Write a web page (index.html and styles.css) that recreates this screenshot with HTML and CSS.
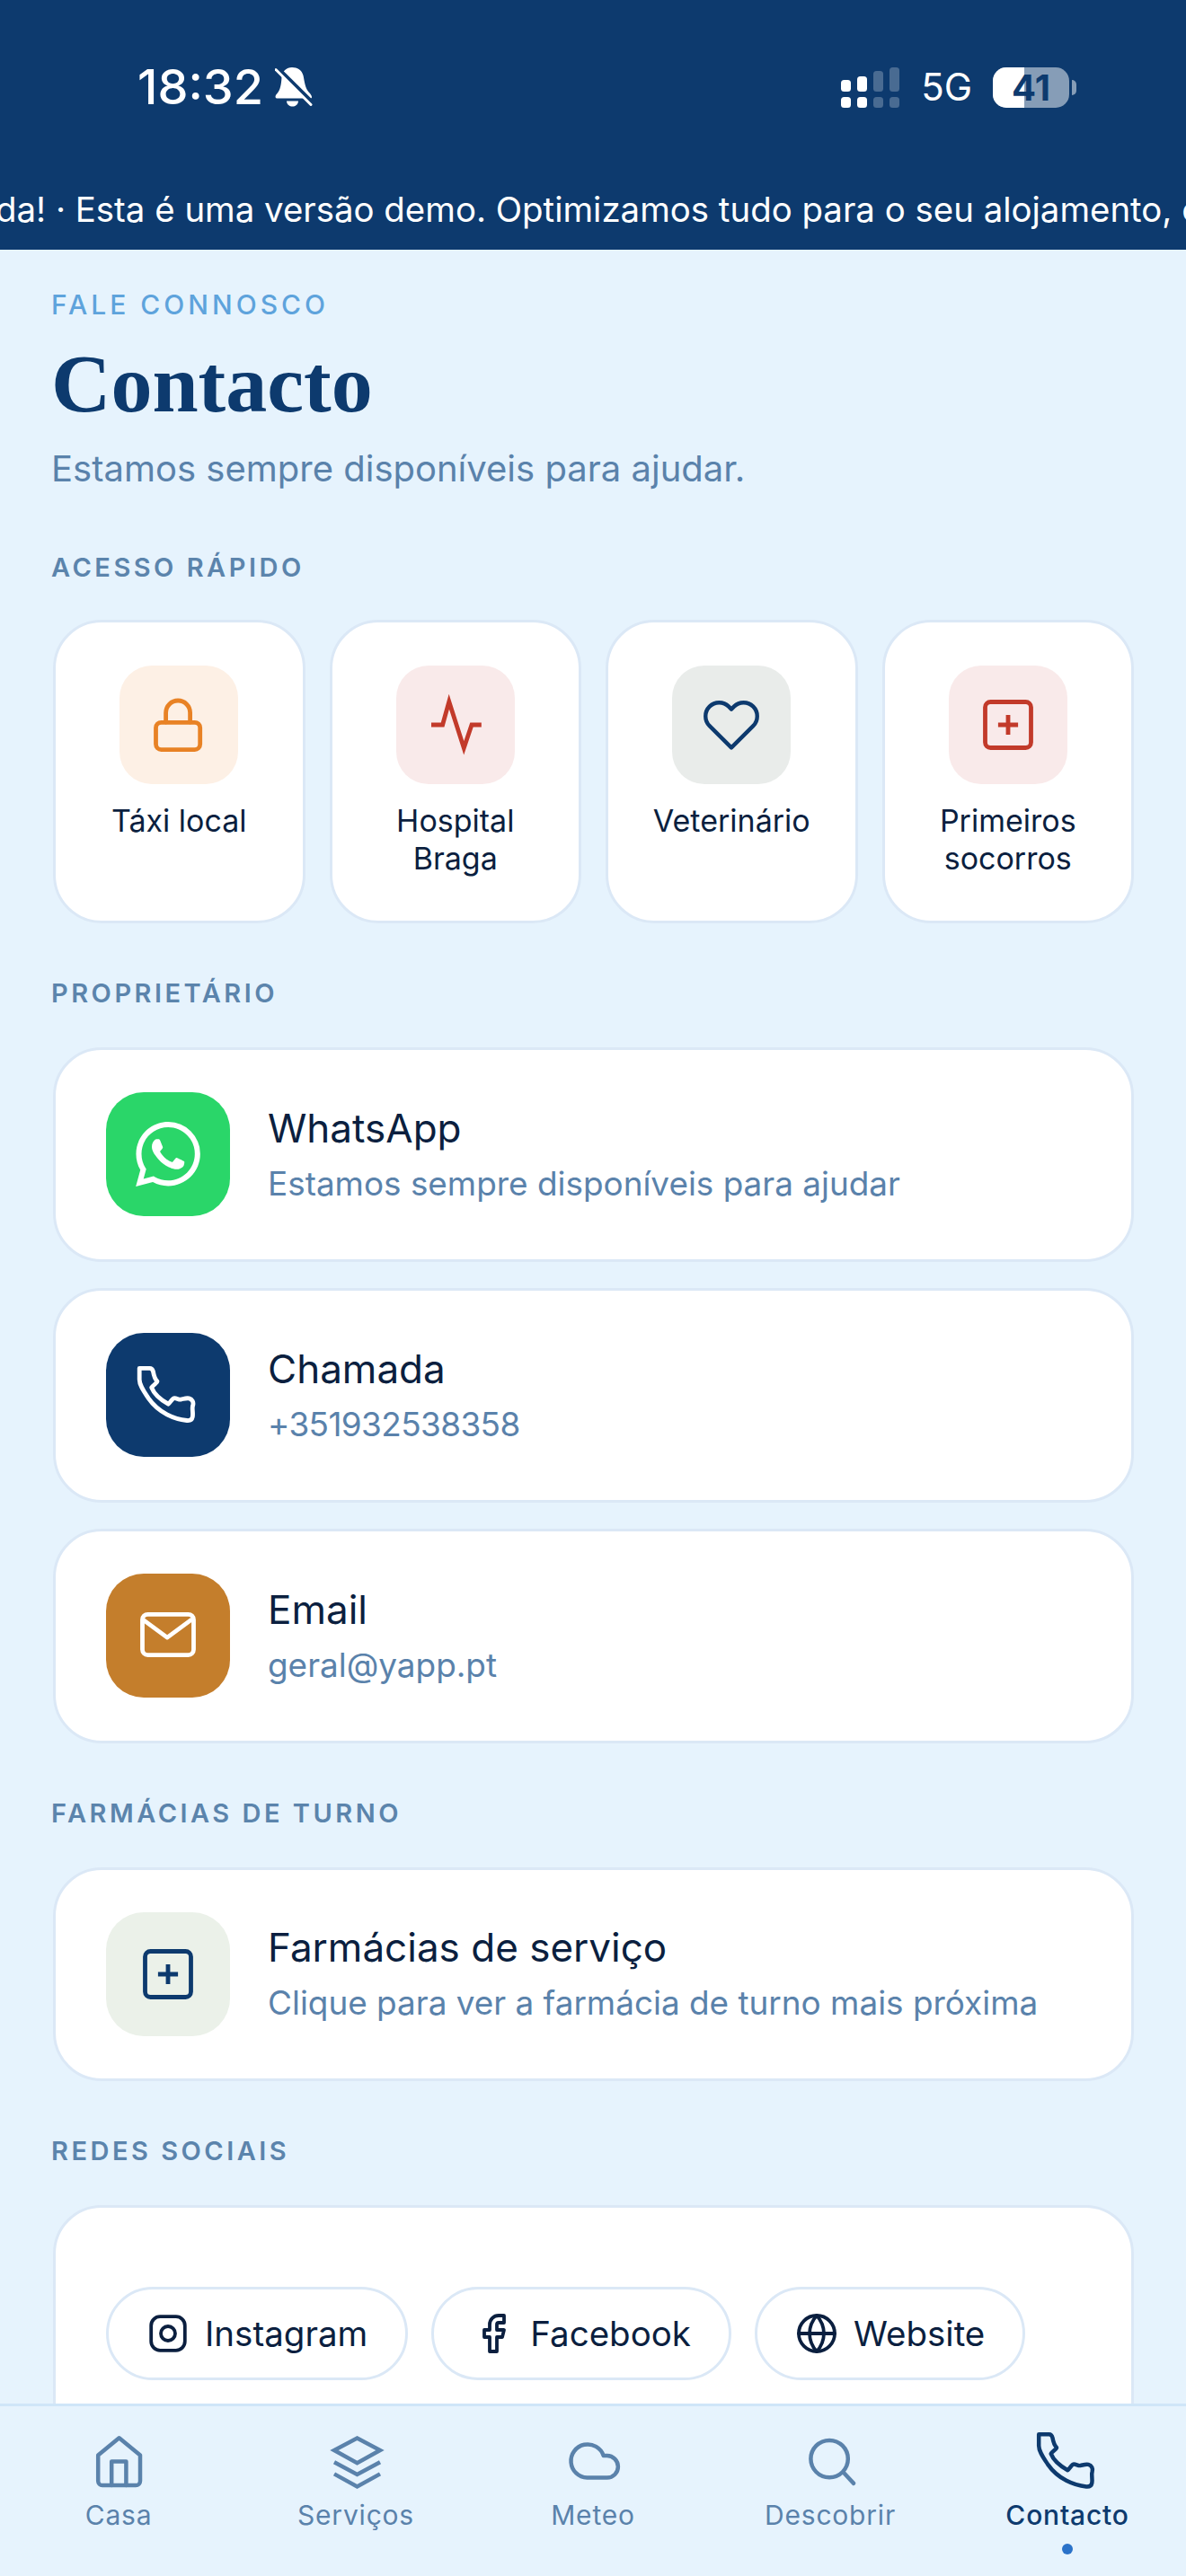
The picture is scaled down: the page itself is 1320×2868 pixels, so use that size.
FILE: index.html
```html
<!DOCTYPE html>
<html lang="pt">
<head>
    <meta charset="UTF-8">
    <meta name="viewport" content="width=device-width, initial-scale=1.0">
    <title>Contacto</title>
    <link rel="stylesheet" href="styles.css">
</head>
<body>
    <div id="app">
        <header class="topBox">
            <div class="statusBar">
                <div class="statusLeft">
                    <span class="time">18:32</span>
                    <svg class="bell" width="42" height="46" viewBox="0 0 42 46">
                        <path class="bellBody" d="M19 1C25 1 30 4 31.500 10 33 17 33.500 24 38 29 41 32 42 35 40 35.500H2C0 35 0 32.500 2.500 30 6 26 7 20 7.500 12 8 5 13 1 19 1Z"/>
                        <path class="bellBody" d="M13 38.500H26C25.500 46.500 13.500 46.500 13 38.500Z"/>
                        <path class="bellGap" d="M3 1.500 42 40"/>
                        <path class="bellLine" d="M1 3.500 40 42.500"/>
                    </svg>
                </div>
                <div class="statusRight">
                    <svg width="65" height="45" viewBox="0 0 65 45">
                        <g class="sigOn">
                            <rect x="0" y="14" width="11" height="13" rx="3.500"/>
                            <rect x="18" y="10" width="11" height="17" rx="3.500"/>
                            <rect x="0" y="33" width="11" height="12" rx="3.500"/>
                            <rect x="18" y="33" width="11" height="12" rx="3.500"/>
                        </g>
                        <g class="sigOff">
                            <rect x="36" y="4" width="11" height="23" rx="3.500"/>
                            <rect x="54" y="0" width="11" height="27" rx="3.500"/>
                            <rect x="36" y="33" width="11" height="12" rx="3.500"/>
                            <rect x="54" y="33" width="11" height="12" rx="3.500"/>
                        </g>
                    </svg>
                    <span class="net">5G</span>
                    <div class="battery">
                        <div class="batteryFill" style="width: 41%"></div>
                        <span class="batteryText">41</span>
                    </div>
                    <div class="batteryNub"></div>
                </div>
            </div>
            <div class="ticker">da! · Esta é uma versão demo. Optimizamos tudo para o seu alojamento, c</div>
        </header>

        <main class="content">
            <p class="eyebrow">FALE CONNOSCO</p>
            <h1>Contacto</h1>
            <p class="lead">Estamos sempre disponíveis para ajudar.</p>

            <h2 class="sectionLabel firstLabel">ACESSO RÁPIDO</h2>
            <div class="quickGrid">
                <div class="quickCard">
                    <div class="quickIcon tintOrange">
                        <svg class="stroke orange" width="72" height="72" viewBox="0 0 24 24">
                            <rect x="3.500" y="11.100" width="16.400" height="10.100" rx="2"/>
                            <path d="M7.200 11V7.500a4.500 4.500 0 0 1 9 0V11"/>
                        </svg>
                    </div>
                    <span>Táxi local</span>
                </div>
                <div class="quickCard">
                    <div class="quickIcon tintRed">
                        <svg class="stroke red sharp" width="72" height="72" viewBox="0 0 24 24">
                            <path d="M3 12h4.200L9.600 3.400 15.100 20.600 18 12h3.600"/>
                        </svg>
                    </div>
                    <span>Hospital Braga</span>
                </div>
                <div class="quickCard">
                    <div class="quickIcon tintGrey">
                        <svg class="stroke navy" width="66" height="66" viewBox="0 0 24 24">
                            <path d="M20.840 4.610a5.500 5.500 0 0 0-7.780 0L12 5.670l-1.060-1.060a5.500 5.500 0 0 0-7.780 7.780L12 21.230l8.840-8.840a5.500 5.500 0 0 0 0-7.780z"/>
                        </svg>
                    </div>
                    <span>Veterinário</span>
                </div>
                <div class="quickCard">
                    <div class="quickIcon tintRed">
                        <svg class="stroke red" width="72" height="72" viewBox="0 0 24 24">
                            <rect x="3.500" y="3.500" width="17" height="17" rx="2"/>
                            <path class="sharp" d="M12 8.300v7.400M8.300 12h7.400"/>
                        </svg>
                    </div>
                    <span>Primeiros socorros</span>
                </div>
            </div>

            <h2 class="sectionLabel">PROPRIETÁRIO</h2>
            <div class="rowList">
                <div class="rowCard">
                    <div class="rowIcon green">
                        <svg class="solid" width="72" height="72" viewBox="0 0 24 24">
                            <path d="M17.472 14.382c-.297-.149-1.758-.867-2.030-.967-.273-.099-.471-.148-.670.150-.197.297-.767.966-.940 1.164-.173.199-.347.223-.644.075-.297-.150-1.255-.463-2.390-1.475-.883-.788-1.480-1.761-1.653-2.059-.173-.297-.018-.458.130-.606.134-.133.298-.347.446-.520.149-.174.198-.298.298-.497.099-.198.050-.371-.025-.520-.075-.149-.669-1.612-.916-2.207-.242-.579-.487-.500-.669-.510-.173-.008-.371-.010-.570-.010-.198 0-.520.074-.792.372-.272.297-1.040 1.016-1.040 2.479 0 1.462 1.065 2.875 1.213 3.074.149.198 2.096 3.200 5.077 4.487.709.306 1.262.489 1.694.625.712.227 1.360.195 1.871.118.571-.085 1.758-.719 2.006-1.413.248-.694.248-1.289.173-1.413-.074-.124-.272-.198-.570-.347m-5.421 7.403h-.004a9.870 9.870 0 01-5.031-1.378l-.361-.214-3.741.982.998-3.648-.235-.374a9.860 9.860 0 01-1.510-5.260c.001-5.450 4.436-9.884 9.888-9.884 2.640 0 5.122 1.030 6.988 2.898a9.825 9.825 0 012.893 6.994c-.003 5.450-4.437 9.884-9.885 9.884m8.413-18.297A11.815 11.815 0 0012.050 0C5.495 0 .160 5.335.157 11.892c0 2.096.547 4.142 1.588 5.945L.057 24l6.305-1.654a11.882 11.882 0 005.683 1.448h.005c6.554 0 11.890-5.335 11.893-11.893a11.821 11.821 0 00-3.480-8.413z"/>
                        </svg>
                    </div>
                    <div class="rowText">
                        <strong>WhatsApp</strong>
                        <span>Estamos sempre disponíveis para ajudar</span>
                    </div>
                </div>
                <div class="rowCard">
                    <div class="rowIcon darkBlue">
                        <svg class="stroke white" width="72" height="72" viewBox="0 0 24 24">
                            <path d="M1.400 2.100H5.200C6 2.100 6.300 2.600 6.500 3.400 6.700 4.600 7 6 8 7 8.200 7.400 6.600 8.200 5.900 9.300 6.800 11.600 9.600 14 12.100 15.400 12.900 14.800 13.600 13.200 14.400 13.200 15.300 13.200 15.900 13.800 16.800 13.700 17.800 13.500 18.600 13.100 19.800 13.300 21 13.600 21.600 14.800 21.200 16 20.800 17 21.400 18.600 21.100 20.200 20.900 21.200 20 21.600 19 21.500 14.500 21 8.600 18.800 4.700 13.200 3 10.600 1.400 8.400 1.400 6.300Z"/>
                        </svg>
                    </div>
                    <div class="rowText">
                        <strong>Chamada</strong>
                        <span class="phone">+351932538358</span>
                    </div>
                </div>
                <div class="rowCard">
                    <div class="rowIcon ochre">
                        <svg class="stroke white" width="72" height="72" viewBox="0 0 24 24">
                            <rect x="2.500" y="4.100" width="19" height="15.100" rx="2"/>
                            <path d="M3 6.300l8.700 6.400 8.700-6.400"/>
                        </svg>
                    </div>
                    <div class="rowText">
                        <strong>Email</strong>
                        <span>geral@yapp.pt</span>
                    </div>
                </div>
            </div>

            <h2 class="sectionLabel">FARMÁCIAS DE TURNO</h2>
            <div class="rowList">
                <div class="rowCard">
                    <div class="rowIcon paleGreen">
                        <svg class="stroke navy" width="72" height="72" viewBox="0 0 24 24">
                            <rect x="3.500" y="3.500" width="17" height="17" rx="2"/>
                            <path class="sharp" d="M12 8.300v7.400M8.300 12h7.400"/>
                        </svg>
                    </div>
                    <div class="rowText">
                        <strong>Farmácias de serviço</strong>
                        <span>Clique para ver a farmácia de turno mais próxima</span>
                    </div>
                </div>
            </div>

            <h2 class="sectionLabel">REDES SOCIAIS</h2>
            <div class="socialCard">
                <div class="pill">
                    <svg class="stroke ink heavy" width="48" height="48" viewBox="0 0 24 24">
                        <rect x="2.600" y="2.600" width="18.800" height="18.800" rx="5"/>
                        <circle cx="12" cy="12" r="4"/>
                    </svg>
                    Instagram
                </div>
                <div class="pill">
                    <svg class="stroke ink heavy" width="48" height="48" viewBox="0 0 24 24">
                        <path d="M18 2h-3a5 5 0 0 0-5 5v3H7v4h3v8h4v-8h3l1-4h-4V7a1 1 0 0 1 1-1h3z"/>
                    </svg>
                    Facebook
                </div>
                <div class="pill">
                    <svg class="stroke ink heavy" width="48" height="48" viewBox="0 0 24 24">
                        <circle cx="12" cy="12" r="10"/>
                        <path d="M2 12h20M12 2a15.300 15.300 0 0 1 4 10 15.300 15.300 0 0 1-4 10 15.300 15.300 0 0 1-4-10 15.300 15.300 0 0 1 4-10z"/>
                    </svg>
                    Website
                </div>
            </div>
        </main>

        <nav class="bottomNav">
            <div class="navItem">
                <svg class="stroke thin" width="72" height="72" viewBox="0 0 24 24">
                    <path d="M4.400 9.800 12.200 3.400 20 9.800V19.400a1.600 1.600 0 0 1-1.600 1.600H6a1.600 1.600 0 0 1-1.600-1.600Z"/>
                    <path d="M9.400 21V12.200h5.400V21"/>
                </svg>
                <span>Casa</span>
            </div>
            <div class="navItem">
                <svg class="stroke thin sharp" width="72" height="72" viewBox="0 0 24 24">
                    <path d="M12.500 3.500 21 8 12.500 12.700 4 8Z"/>
                    <path d="M4 12.400 12.500 17 21 12.400"/>
                    <path d="M4 16.800 12.500 21.500 21 16.800"/>
                </svg>
                <span>Serviços</span>
            </div>
            <div class="navItem">
                <svg class="stroke thin" width="72" height="72" viewBox="0 0 24 24">
                    <path d="M9.800 18.200h7.400a4.100 4.100 0 0 0 0-8.200h-1.300A6.200 6.200 0 1 0 9.800 18.200z"/>
                </svg>
                <span>Meteo</span>
            </div>
            <div class="navItem">
                <svg class="stroke thin" width="72" height="72" viewBox="0 0 24 24">
                    <circle cx="11.700" cy="11.200" r="6.900"/>
                    <path d="M17.100 16.400 20.700 20.300"/>
                </svg>
                <span>Descobrir</span>
            </div>
            <div class="navItem active">
                <svg class="stroke thin navy" width="72" height="72" viewBox="0 0 24 24">
                    <path d="M1.400 2.100H5.200C6 2.100 6.300 2.600 6.500 3.400 6.700 4.600 7 6 8 7 8.200 7.400 6.600 8.200 5.900 9.300 6.800 11.600 9.600 14 12.100 15.400 12.900 14.800 13.600 13.200 14.400 13.200 15.300 13.200 15.900 13.800 16.800 13.700 17.800 13.500 18.600 13.100 19.800 13.300 21 13.600 21.600 14.800 21.200 16 20.800 17 21.400 18.600 21.100 20.200 20.900 21.200 20 21.600 19 21.500 14.500 21 8.600 18.800 4.700 13.200 3 10.600 1.400 8.400 1.400 6.300Z"/>
                </svg>
                <span>Contacto</span>
                <i class="navDot"></i>
            </div>
        </nav>
    </div>
</body>
</html>
```

FILE: styles.css
```css
* {
    box-sizing: border-box;
}
body {
    margin: 0;
    font-family: "Inter", "Noto Sans", sans-serif;
    color: #0b1f3f;
    background-color: #e6f3fd;
}
#app {
    display: flex;
    flex-direction: column;
    height: 2868px;
    overflow: hidden;
}

/* top bar */
.topBox {
    height: 278px;
    flex-shrink: 0;
    background-color: #0d3a6e;
    color: #fff;
    padding-top: 74px;
}
.statusBar {
    display: flex;
    justify-content: space-between;
    align-items: center;
    height: 46px;
    padding-left: 153px;
    padding-right: 122px;
}
.statusLeft {
    display: flex;
    align-items: center;
    gap: 13px;
}
.time {
    font-size: 54px;
    font-weight: 500;
    line-height: 46px;
}
.bellBody {
    fill: #fff;
}
.bellGap {
    stroke: #0d3a6e;
    stroke-width: 4;
    fill: none;
}
.bellLine {
    stroke: #fff;
    stroke-width: 3;
    stroke-linecap: round;
    fill: none;
}
.statusRight {
    display: flex;
    align-items: center;
}
.sigOn rect {
    fill: #fff;
}
.sigOff rect {
    fill: rgba(255, 255, 255, 0.25);
}
.net {
    margin-left: 24px;
    font-size: 42px;
    line-height: 46px;
}
.battery {
    position: relative;
    width: 85px;
    height: 45px;
    margin-left: 23px;
    border-radius: 15px;
    background-color: rgba(255, 255, 255, 0.5);
}
.batteryFill {
    height: 100%;
    border-radius: 15px 0 0 15px;
    background-color: #fff;
}
.batteryText {
    position: absolute;
    top: 0;
    left: 0;
    right: 0;
    text-align: center;
    font-size: 40px;
    font-weight: 700;
    line-height: 45px;
    color: #0d3a6e;
}
.batteryNub {
    width: 5px;
    height: 17px;
    margin-left: 3px;
    border-radius: 0 5px 5px 0;
    background-color: rgba(255, 255, 255, 0.5);
}
.ticker {
    margin-top: 88px;
    margin-left: -5px;
    font-size: 38.400px;
    line-height: 50px;
    white-space: nowrap;
}

/* page content */
.content {
    flex: 1;
    min-height: 0;
    overflow: hidden;
    padding: 43px 58px 0 59px;
}
.eyebrow {
    margin: 0 0 0 -2px;
    font-size: 30px;
    font-weight: 500;
    line-height: 36px;
    letter-spacing: 4px;
    color: #5ea3dc;
}
h1 {
    margin: 20px 0 0 -2px;
    font-family: "Liberation Serif", serif;
    font-size: 92px;
    font-weight: 700;
    line-height: 100px;
    color: #0d3a6e;
}
.lead {
    margin: 20px 0 0 -2px;
    font-size: 40px;
    line-height: 50px;
    color: #5a82ab;
}
.sectionLabel {
    margin: 60px 0 42px -2px;
    font-size: 29px;
    font-weight: 600;
    line-height: 36px;
    letter-spacing: 3.500px;
    color: #5b84ac;
}
.firstLabel {
    margin-top: 67px;
    margin-bottom: 40px;
}

/* quick access */
.quickGrid {
    display: grid;
    grid-template-columns: repeat(4, 1fr);
    gap: 27px;
}
.quickCard {
    display: flex;
    flex-direction: column;
    align-items: center;
    padding: 48px 30px;
    text-align: center;
    font-size: 34px;
    font-weight: 400;
    line-height: 42px;
    background-color: #fff;
    border: 3px solid #dbe8f6;
    border-radius: 54px;
}
.quickIcon {
    display: flex;
    align-items: center;
    justify-content: center;
    flex-shrink: 0;
    width: 132px;
    height: 132px;
    margin-bottom: 20px;
    border-radius: 36px;
}
.tintOrange {
    background-color: #fdf0e5;
}
.tintRed {
    background-color: #f9eaea;
}
.tintGrey {
    background-color: #e9ecea;
}

/* list cards */
.rowList {
    display: flex;
    flex-direction: column;
    gap: 29.500px;
}
.rowCard {
    display: flex;
    align-items: center;
    gap: 42px;
    height: 238.500px;
    padding-left: 56px;
    background-color: #fff;
    border: 3px solid #dbe8f6;
    border-radius: 54px;
}
.rowIcon {
    display: flex;
    align-items: center;
    justify-content: center;
    width: 138px;
    height: 138px;
    border-radius: 42px;
}
.green {
    background-color: #2ad669;
}
.darkBlue {
    background-color: #0d3a6e;
}
.ochre {
    background-color: #c47e2c;
}
.paleGreen {
    background-color: #ebf1e9;
}
.rowText {
    display: flex;
    flex-direction: column;
    gap: 9px;
}
.rowText strong {
    font-size: 44px;
    font-weight: 400;
    line-height: 56px;
}
.rowText span {
    font-size: 36.900px;
    line-height: 50px;
    color: #5a82ab;
}
.rowText .phone {
    letter-spacing: -0.600px;
}

/* social */
.socialCard {
    display: flex;
    gap: 26px;
    height: 300px;
    padding: 88px 0 0 56px;
    background-color: #fff;
    border: 3px solid #dbe8f6;
    border-radius: 54px;
}
.pill {
    display: flex;
    align-items: center;
    gap: 17px;
    height: 104px;
    padding: 0 42px 0 42px;
    font-size: 38.500px;
    font-weight: 400;
    border: 3px solid #dbe8f6;
    border-radius: 52px;
}

/* icons */
.stroke {
    fill: none;
    stroke: #5a82ab;
    stroke-width: 1.600;
    stroke-linecap: round;
    stroke-linejoin: round;
}
.stroke.sharp, .sharp {
    stroke-linecap: butt;
    stroke-linejoin: miter;
}
.stroke.thin {
    stroke-width: 1.500;
}
.stroke.heavy {
    stroke-width: 1.900;
}
.stroke.navy {
    stroke: #0d3a6e;
}
.stroke.white {
    stroke: #fff;
}
.stroke.ink {
    stroke: #0b1f3f;
}
.stroke.orange {
    stroke: #e88225;
}
.stroke.red {
    stroke: #c23a2a;
}
.solid {
    fill: #fff;
}

/* bottom nav */
.bottomNav {
    display: flex;
    flex-shrink: 0;
    height: 192px;
    padding-top: 25px;
    background-color: #e6f3fd;
    border-top: 3px solid #cfe6f8;
}
.navItem {
    flex: 1;
    display: flex;
    flex-direction: column;
    align-items: center;
    font-size: 30px;
    line-height: 36px;
    letter-spacing: 0.800px;
    color: #5a82ab;
}
.navItem span {
    margin-top: 6px;
}
.navItem.active {
    font-weight: 500;
    color: #0d3a6e;
}
.navDot {
    width: 12px;
    height: 12px;
    margin-top: 14px;
    border-radius: 50%;
    background-color: #2a72c9;
}
```
